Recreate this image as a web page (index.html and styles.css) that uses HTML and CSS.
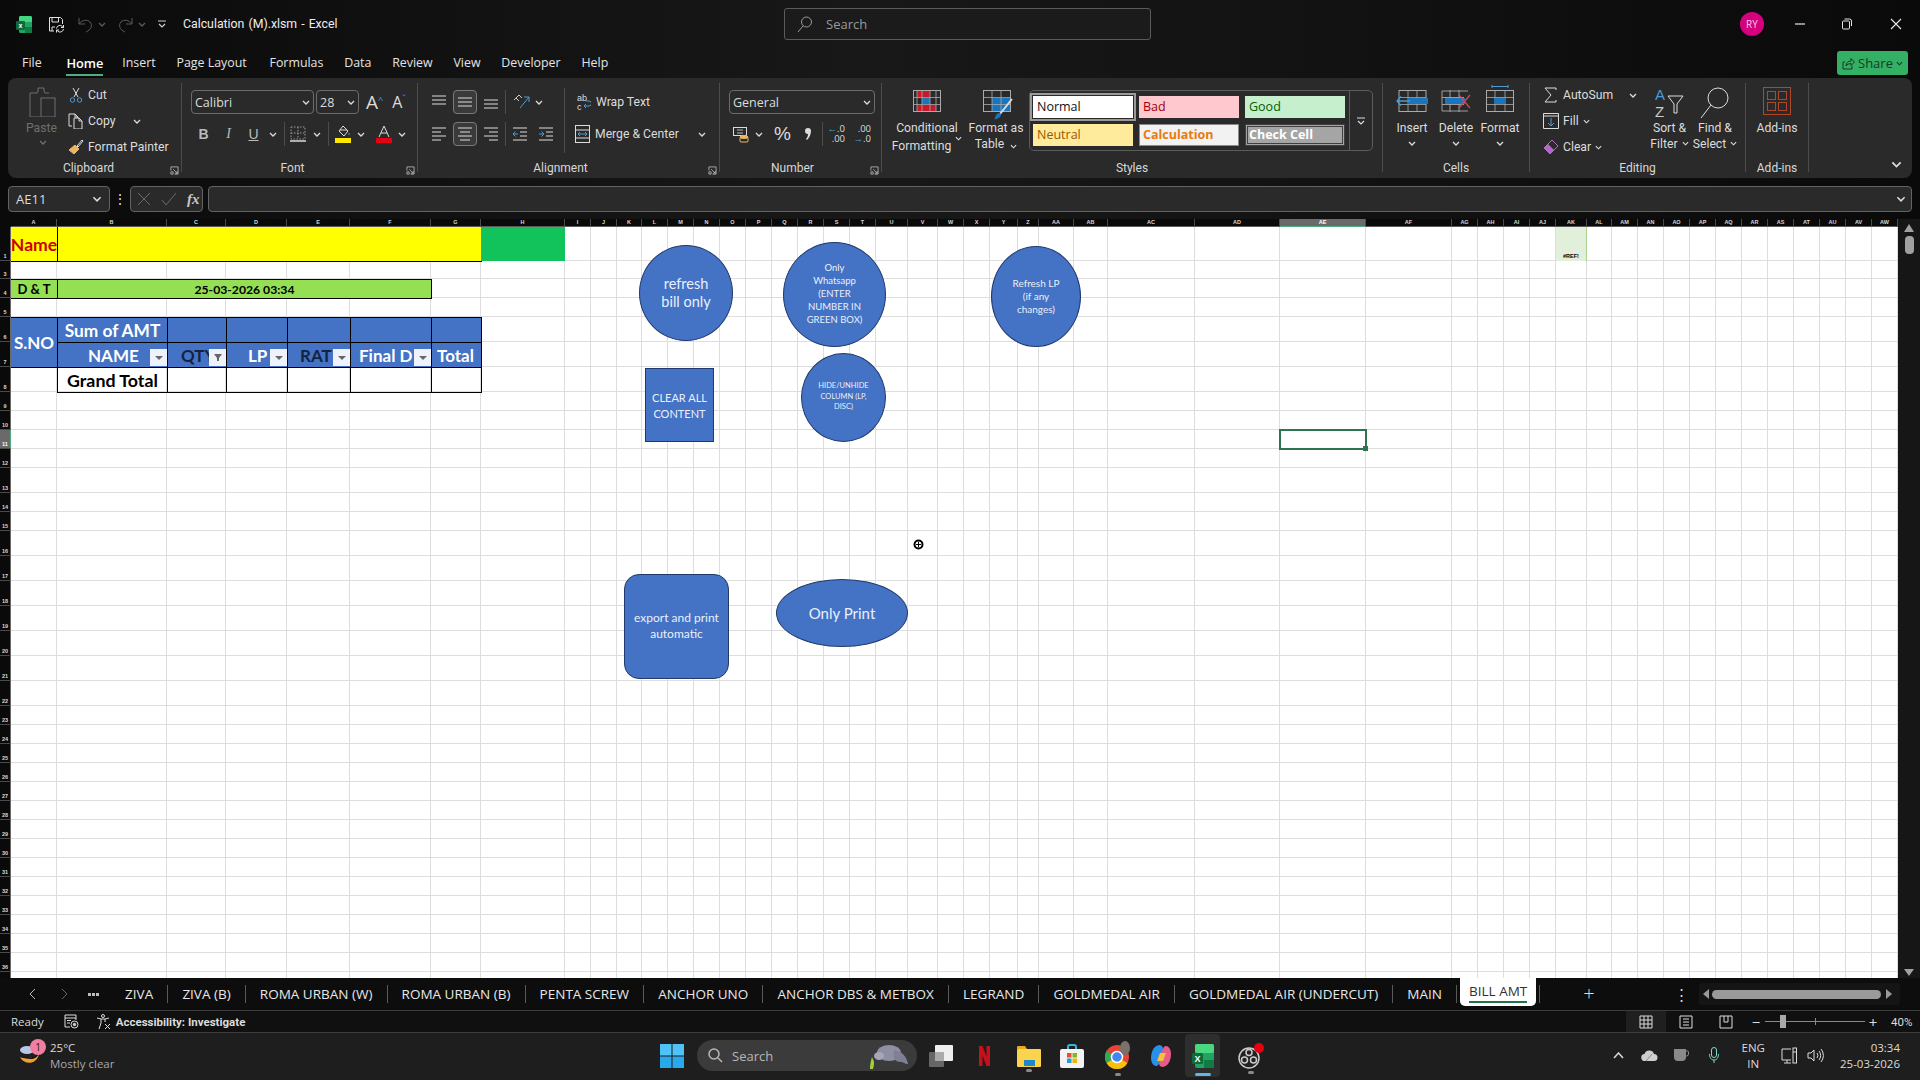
FILE: index.html
```html
<!DOCTYPE html>
<html lang="en">
<head>
    <meta charset="UTF-8">
    <title>Calculation (M).xlsm - Excel</title>
    <link rel="stylesheet" href="styles.css">
</head>
<body>
    <svg class="sprite">
        <symbol id="chev" viewBox="0 0 8 5"><path d="M1 1l3 3 3-3" stroke-width="1.3"/></symbol>
        <symbol id="launcher" viewBox="0 0 10 10"><path d="M1 5V1h8v8H5M3.5 3.5L8 8M5.5 8H8V5.5M1 6.5h2.5V9H1z" stroke-width=".9"/></symbol>
        <symbol id="al-top" viewBox="0 0 14 14"><path d="M0 1h14M0 5h14M0 9h14"/></symbol>
        <symbol id="al-mid" viewBox="0 0 14 14"><path d="M0 3h14M0 7h14M0 11h14"/></symbol>
        <symbol id="al-bot" viewBox="0 0 14 14"><path d="M0 5h14M0 9h14M0 13h14"/></symbol>
        <symbol id="al-left" viewBox="0 0 14 14"><path d="M0 1h14M0 5h9M0 9h14M0 13h9"/></symbol>
        <symbol id="al-center" viewBox="0 0 14 14"><path d="M0 1h14M2 5h10M0 9h14M2 13h10"/></symbol>
        <symbol id="al-right" viewBox="0 0 14 14"><path d="M0 1h14M5 5h9M0 9h14M5 13h9"/></symbol>
    </svg>

    <div class="titlebar">
        <div class="qat">
            <svg class="logo" width="16" height="17" viewBox="0 0 16 17"><rect x="3" y="0" width="13" height="17" rx="1.5" fill="#21a366" stroke="none"/><rect x="3" y="0" width="13" height="6" rx="1.5" fill="#41d67f" stroke="none"/><rect x="9" y="11" width="7" height="6" fill="#107c41" stroke="none"/><rect x="0" y="5" width="9" height="9" rx="1" fill="#0c6b37" stroke="none"/><text x="4.5" y="12.2" class="logo-x">x</text></svg>
            <svg class="save" width="17" height="17" viewBox="0 0 17 17"><path d="M6 15H1.5V1.5h11l2 2V8M4 1.5V6h6.500V1.500M4 15v-4h3"/><path d="M8.500 12.500a3.500 3.500 0 0 1 6-2l1 1M15.500 9v2.500H13M15.500 13a3.500 3.500 0 0 1-6 2l-1-1M8.500 16.500V14H11"/></svg>
            <svg class="undo" width="17" height="17" viewBox="0 0 17 17"><path d="M2 2v6h6M2 8c3-4 8-5 11-2 3 3 1 8-4 10"/></svg>
            <svg class="chev dim" width="8" height="5"><use href="#chev"/></svg>
            <svg class="redo" width="17" height="17" viewBox="0 0 17 17"><path d="M15 2v6H9M15 8c-3-4-8-5-11-2-3 3-1 8 4 10"/></svg>
            <svg class="chev dim" width="8" height="5"><use href="#chev"/></svg>
            <svg class="customize" width="8" height="8" viewBox="0 0 8 8"><path d="M0 1h8M1 4l3 3 3-3" stroke-width="1.2"/></svg>
            <span class="doc-name">Calculation (M).xlsm&nbsp;-&nbsp;Excel</span>
        </div>
        <div class="search-box">
            <svg width="15" height="17" viewBox="0 0 15 17"><circle cx="9.500" cy="6" r="5"/><path d="M6 10l-5 6"/></svg>
            <span>Search</span>
        </div>
        <div class="window-ctrls">
            <div class="avatar">RY</div>
            <svg class="win-min" width="12" height="12" viewBox="0 0 12 12"><path d="M1 6h10" stroke-width="1.2"/></svg>
            <svg class="win-max" width="12" height="12" viewBox="0 0 12 12"><rect x="1.500" y="3" width="7" height="8" rx="1"/><path d="M3.500 1h5a2 2 0 0 1 2 2v5"/></svg>
            <svg class="win-close" width="12" height="12" viewBox="0 0 12 12"><path d="M1 1l10 10M11 1L1 11" stroke-width="1.2"/></svg>
        </div>
    </div>

    <div class="menubar">
        <a class="menu-file">File</a>
        <a class="menu-active">Home</a>
        <a>Insert</a>
        <a>Page Layout</a>
        <a class="menu-formulas">Formulas</a>
        <a>Data</a>
        <a>Review</a>
        <a>View</a>
        <a>Developer</a>
        <a>Help</a>
        <div class="share">
            <svg width="13" height="13" viewBox="0 0 13 13"><path d="M3 5H1v7h9V9M4 9c0-3 2-5 5-5V1.500l3.500 3.500L9 8.500V6.500C7 6.500 5 7.500 4 9z"/></svg>
            <span>Share</span>
            <svg width="7" height="5"><use href="#chev"/></svg>
        </div>
    </div>

    <div class="ribbon">
        <section class="group g-clipboard">
            <div class="group-body">
                <div class="paste">
                    <svg width="28" height="30" viewBox="0 0 28 30"><path d="M20 6h-4l-1-2V1H9v3L8 6H1v24h10"/><rect x="12" y="11" width="14" height="19"/></svg>
                    <span>Paste</span>
                    <svg width="8" height="5"><use href="#chev"/></svg>
                </div>
                <div class="small-col">
                    <div class="small-row"><svg class="ic16" viewBox="0 0 16 16"><path d="M5 1l5 9M11 1L6 10"/><circle cx="4.500" cy="13" r="2.200" stroke="#4a9bd8"/><circle cx="11.500" cy="13" r="2.200" stroke="#4a9bd8"/></svg><span>Cut</span></div>
                    <div class="small-row"><svg class="ic16" viewBox="0 0 16 16"><path d="M4 13H1V1h6l3 3v1M7 1v3h3"/><path d="M6 5h5l3 3v8H6zM11 5v3h3"/></svg><span>Copy</span><svg class="copy-chev" width="8" height="5"><use href="#chev"/></svg></div>
                    <div class="small-row"><svg class="ic16" viewBox="0 0 16 16"><path d="M9 7l5-6 1 1-5 6z" stroke="#ddd"/><path d="M7 6l4 4-5 5-5-4z" fill="#e8b563" stroke="#e8b563"/></svg><span>Format Painter</span></div>
                </div>
            </div>
            <div class="group-label">Clipboard</div>
            <svg class="launcher" width="9" height="9"><use href="#launcher"/></svg>
        </section>

        <section class="group g-font">
            <div class="group-body rows">
                <div class="row">
                    <div class="select font-name"><span>Calibri</span><svg width="8" height="5"><use href="#chev"/></svg></div>
                    <div class="select font-size"><span>28</span><svg width="8" height="5"><use href="#chev"/></svg></div>
                    <div class="grow-a">A<sup>^</sup></div>
                    <div class="shrink-a">A<sup>ˇ</sup></div>
                </div>
                <div class="row">
                    <div class="tb bold">B</div>
                    <div class="tb italic">I</div>
                    <div class="tb under">U</div>
                    <svg class="tb-chev" width="14" height="5"><use href="#chev"/></svg>
                    <div class="sep sep-a"></div>
                    <svg class="borders" width="16" height="16" viewBox="0 0 16 16"><path d="M1 1h14v12H1zM8 1v12M1 7h14" stroke-dasharray="1.500 1.500" stroke="#999"/><path d="M0 15h16" stroke-width="1.500"/></svg>
                    <svg class="tb-chev" width="14" height="5"><use href="#chev"/></svg>
                    <div class="sep sep-b"></div>
                    <svg class="fill-ic" width="16" height="18" viewBox="0 0 16 18"><path d="M8 1l5 5-4 5-5-5zM5 5h7"/><path d="M14 8v2" stroke="#4a9bd8"/><rect y="13" width="16" height="5" fill="#ffe800" stroke="none"/></svg>
                    <svg class="tb-chev" width="14" height="5"><use href="#chev"/></svg>
                    <svg class="color-ic" width="16" height="18" viewBox="0 0 16 18"><path d="M3 12L8 1l5 11M5 8h6"/><rect y="13" width="16" height="5" fill="#e60012" stroke="none"/></svg>
                    <svg class="tb-chev" width="14" height="5"><use href="#chev"/></svg>
                </div>
            </div>
            <div class="group-label">Font</div>
            <svg class="launcher" width="9" height="9"><use href="#launcher"/></svg>
        </section>

        <section class="group g-align">
            <div class="group-body g-align-body">
                <div class="rows align-col">
                    <div class="row">
                        <svg class="al" width="14" height="14"><use href="#al-top"/></svg>
                        <div class="al-box"><svg width="14" height="14"><use href="#al-mid"/></svg></div>
                        <svg class="al" width="14" height="14"><use href="#al-bot"/></svg>
                        <div class="sep"></div>
                        <svg class="orient" width="18" height="18" viewBox="0 0 18 18"><path d="M1 7l5-5 3 3M3 5l3 3" stroke="#ccc"/><path d="M7 15L16 4M11 4h5v5" stroke="#4a9bd8"/></svg>
                        <svg class="orient-chev" width="8" height="5"><use href="#chev"/></svg>
                    </div>
                    <div class="row">
                        <svg class="al" width="14" height="14"><use href="#al-left"/></svg>
                        <div class="al-box"><svg width="14" height="14"><use href="#al-center"/></svg></div>
                        <svg class="al" width="14" height="14"><use href="#al-right"/></svg>
                        <div class="sep"></div>
                        <svg class="indent" width="14" height="14" viewBox="0 0 14 14"><path d="M0 1h14M0 13h14M7 5h7M7 9h7"/><path d="M5 7H0M2.500 4.500L0 7l2.500 2.500" stroke="#4a9bd8"/></svg>
                        <svg class="indent" width="14" height="14" viewBox="0 0 14 14"><path d="M0 1h14M0 13h14M7 5h7M7 9h7"/><path d="M0 7h5M2.500 4.500L5 7 2.500 9.500" stroke="#4a9bd8"/></svg>
                    </div>
                </div>
                <div class="rows merge-col">
                    <div class="row">
                        <svg class="wrap-ic" width="14" height="18" viewBox="0 0 14 18"><text x="0" y="8" class="wrap-ab">ab</text><text x="0" y="17" class="wrap-ab">c</text><path d="M9 8h3a2 2 0 0 1 0 5H7M9 11l-2 2 2 2" stroke="#4a9bd8"/></svg>
                        <span>Wrap Text</span>
                    </div>
                    <div class="row">
                        <svg class="merge-ic" width="15" height="18" viewBox="0 0 15 18"><rect x=".5" y=".5" width="14" height="17"/><path d="M0 5h15M0 13h15"/><path d="M3 9h9M5 7L3 9l2 2M10 7l2 2-2 2" stroke="#4a9bd8"/></svg>
                        <span>Merge &amp; Center</span>
                        <svg class="merge-chev" width="8" height="5"><use href="#chev"/></svg>
                    </div>
                </div>
            </div>
            <div class="group-label">Alignment</div>
            <svg class="launcher" width="9" height="9"><use href="#launcher"/></svg>
        </section>

        <section class="group g-number">
            <div class="group-body rows">
                <div class="row">
                    <div class="select number-format"><span>General</span><svg width="8" height="5"><use href="#chev"/></svg></div>
                </div>
                <div class="row">
                    <svg class="acct" width="16" height="17" viewBox="0 0 16 17"><rect x=".5" y="1.500" width="13" height="8"/><path d="M4 4h6M4 7h6" stroke-width=".8"/><ellipse cx="11" cy="11" rx="4" ry="1.500" fill="#e8b563" stroke="#e8b563"/><rect x="7" y="11" width="8" height="5" rx="1" stroke="#e8b563"/></svg>
                    <svg class="tb-chev" width="14" height="5"><use href="#chev"/></svg>
                    <div class="percent">%</div>
                    <svg class="comma" width="6" height="12" viewBox="0 0 6 12"><path d="M3 0a3 3 0 0 1 3 3c0 4-2 7-4 9l-1-1c1-1 2-3 2-5a3 3 0 0 1 0-6z" fill="currentColor" stroke="none"/></svg>
                    <div class="sep sep-dec"></div>
                    <div class="dec-btn"><span><b>←</b>.0</span><span>.00</span></div>
                    <div class="dec-btn dec-b"><span>.00</span><span><b>→</b>.0</span></div>
                </div>
            </div>
            <div class="group-label">Number</div>
            <svg class="launcher" width="9" height="9"><use href="#launcher"/></svg>
        </section>

        <section class="group g-styles">
            <div class="group-body g-styles-body">
                <div class="big-btn cond">
                    <svg width="28" height="22" viewBox="0 0 28 22"><rect x=".5" y=".5" width="27" height="21" stroke="#aaa"/><rect x="4" y="1" width="13" height="6" fill="#c9182b" stroke="none"/><rect x="9" y="8" width="8" height="6" fill="#1a75bc" stroke="none"/><rect x="4" y="15" width="19" height="6" fill="#c9182b" stroke="none"/><path d="M0 7.500h28M0 14.500h28M4 0v22M9 0v22M17 0v22M23 0v22" stroke="#aaa" stroke-width=".8"/></svg>
                    <span>Conditional</span>
                    <span>Formatting <svg class="inline-chev" width="7" height="5"><use href="#chev"/></svg></span>
                </div>
                <div class="big-btn as-table">
                    <svg width="30" height="32" viewBox="0 0 30 32"><rect x=".5" y=".5" width="27" height="21" stroke="#aaa"/><rect x="9" y="8" width="18" height="13" fill="#1a75bc" stroke="none"/><path d="M0 7.500h28M0 14.500h28M9 0v22M18 0v22" stroke="#aaa" stroke-width=".8"/><path d="M29 9L17 24" stroke="#ddd" stroke-width="2"/><path d="M13 25c3-3 5-2 5 0s-4 5-7 4c2-1 1-3 2-4z" fill="#1a75bc" stroke="none"/></svg>
                    <span>Format as</span>
                    <span>Table <svg class="inline-chev" width="7" height="5"><use href="#chev"/></svg></span>
                </div>
                <div class="gallery">
                    <div class="gallery-grid">
                        <div class="st st-normal">Normal</div>
                        <div class="st st-bad">Bad</div>
                        <div class="st st-good">Good</div>
                        <div class="st st-neutral">Neutral</div>
                        <div class="st st-calc">Calculation</div>
                        <div class="st st-check">Check Cell</div>
                    </div>
                    <div class="gallery-more"><svg width="8" height="8" viewBox="0 0 8 8"><path d="M0 1h8M1 4l3 3 3-3" stroke-width="1.2"/></svg></div>
                </div>
            </div>
            <div class="group-label">Styles</div>
        </section>

        <section class="group g-cells">
            <div class="group-body g-cells-body">
                <div class="big-btn cell-btn">
                    <svg width="32" height="22" viewBox="0 0 32 22"><rect x="3" y=".5" width="27" height="21" stroke="#aaa"/><path d="M3 7.500h27M3 14.500h27M12 0v22M21 0v22" stroke="#aaa" stroke-width=".8"/><rect x="12" y="8" width="20" height="6" fill="#1a75bc" stroke="none"/><path d="M14 11H1M5 6.500L1 11l4 4.500" stroke="#4a9bd8" stroke-width="1.300"/></svg>
                    <span>Insert</span>
                    <svg class="under-chev" width="8" height="5"><use href="#chev"/></svg>
                </div>
                <div class="big-btn cell-btn">
                    <svg width="30" height="22" viewBox="0 0 30 22"><path d="M27 1H1v20h26M1 7.500h22M1 14.500h22M9 0v22M18 0v22" stroke="#aaa" stroke-width=".9"/><rect x="4" y="8" width="20" height="6" fill="#1a75bc" stroke="none"/><path d="M18 5l11 13M29 5L18 18" stroke="#c94a55" stroke-width="1.300"/></svg>
                    <span>Delete</span>
                    <svg class="under-chev" width="8" height="5"><use href="#chev"/></svg>
                </div>
                <div class="big-btn cell-btn cell-format">
                    <svg width="28" height="27" viewBox="0 0 28 27"><path d="M6 1.500h16M6 0v3M22 0v3" stroke="#4a9bd8"/><rect x=".5" y="5.500" width="27" height="21" stroke="#aaa"/><path d="M0 12.500h28M0 19.500h28M9 5v22M19 5v22" stroke="#aaa" stroke-width=".8"/><rect x="8" y="13" width="12" height="6" fill="#1a75bc" stroke="none"/></svg>
                    <span>Format</span>
                    <svg class="under-chev" width="8" height="5"><use href="#chev"/></svg>
                </div>
            </div>
            <div class="group-label">Cells</div>
        </section>

        <section class="group g-editing">
            <div class="group-body g-editing-body">
                <div class="small-col edit-col">
                    <div class="small-row"><svg class="ic16" viewBox="0 0 16 16"><path d="M13 3V1H2l6 7-6 7h11v-2"/></svg><span>AutoSum</span><svg class="sum-chev" width="8" height="5"><use href="#chev"/></svg></div>
                    <div class="small-row"><svg class="ic16" viewBox="0 0 16 16"><path d="M.5.500h15v15H.5zM0 3h16"/><path d="M8 5v8M5 10l3 3 3-3" stroke="#4a9bd8"/></svg><span>Fill</span><svg width="7" height="5"><use href="#chev"/></svg></div>
                    <div class="small-row"><svg class="ic16" viewBox="0 0 16 16"><path d="M9 1l6 6-8 8-6-6z" stroke="#b568c8"/><path d="M5 5l6 6-4 4-6-6z" fill="#b568c8" stroke="none"/></svg><span>Clear</span><svg width="7" height="5"><use href="#chev"/></svg></div>
                </div>
                <div class="big-btn sort-btn">
                    <svg width="30" height="32" viewBox="0 0 30 32"><text x="0" y="13" class="sort-a">A</text><text x="0" y="30" class="sort-z">Z</text><path d="M13 9h15l-6 8v9h-3v-9z"/></svg>
                    <span>Sort &amp;</span>
                    <span>Filter <svg class="inline-chev" width="7" height="5"><use href="#chev"/></svg></span>
                </div>
                <div class="big-btn find-btn">
                    <svg width="30" height="32" viewBox="0 0 30 32"><circle cx="18" cy="11" r="10"/><path d="M11 18L1 31"/></svg>
                    <span>Find &amp;</span>
                    <span>Select <svg class="inline-chev" width="7" height="5"><use href="#chev"/></svg></span>
                </div>
            </div>
            <div class="group-label">Editing</div>
        </section>

        <section class="group g-addins">
            <div class="group-body">
                <div class="big-btn addin-btn">
                    <svg width="28" height="28" viewBox="0 0 28 28"><rect x=".5" y=".5" width="27" height="27"/><rect x="4.500" y="4.500" width="8" height="8"/><rect x="15.500" y="4.500" width="8" height="8"/><rect x="4.500" y="15.500" width="8" height="8"/><rect x="15.500" y="15.500" width="8" height="8"/></svg>
                    <span>Add-ins</span>
                </div>
            </div>
            <div class="group-label">Add-ins</div>
        </section>
        <svg class="collapse" width="11" height="7"><use href="#chev"/></svg>
    </div>

    <div class="formula-bar">
        <div class="name-box"><span>AE11</span><svg width="10" height="6"><use href="#chev"/></svg></div>
        <div class="fb-dots">⋮</div>
        <div class="fx-box">
            <svg width="14" height="14" viewBox="0 0 14 14"><path d="M1 1l12 12M13 1L1 13"/></svg>
            <svg width="16" height="14" viewBox="0 0 16 14"><path d="M1 8l4 5L15 1"/></svg>
            <span>fx</span>
        </div>
        <div class="fb-input"><svg width="10" height="6"><use href="#chev"/></svg></div>
    </div>

    <div class="sheet-wrap">
        <div class="sheet" id="sheet">
            <div class="c c-name-label">Name</div>
            <div class="c c-name-box"></div>
            <div class="c c-green-box"></div>
            <div class="c c-dt-label">D &amp; T</div>
            <div class="c c-dt-value">25-03-2026 03:34</div>

            <div class="c c-sno">S.NO</div>
            <div class="c c-sum hd">Sum of AMT</div>
            <div class="c hd col-c row-sum"></div>
            <div class="c hd col-d row-sum"></div>
            <div class="c hd col-e row-sum"></div>
            <div class="c hd col-f row-sum"></div>
            <div class="c hd col-g row-sum"></div>

            <div class="c hd c-pivot-b row-head">NAME<span class="filter-btn"></span></div>
            <div class="c hd col-c row-head dark-text pad-qty">QTY<span class="filter-btn filtered"><svg width="10" height="10" viewBox="0 0 10 10"><path d="M1 1h8L6 5v3H4V5z" fill="#666" stroke="none"/></svg></span></div>
            <div class="c hd col-d row-head pad-lp">LP<span class="filter-btn"></span></div>
            <div class="c hd col-e row-head dark-text pad-rat">RAT<span class="filter-btn"></span></div>
            <div class="c hd col-f row-head pad-final">Final D<span class="filter-btn"></span></div>
            <div class="c hd col-g row-head pad-total">Total</div>

            <div class="c c-grand">Grand Total</div>
            <div class="c col-c row-total"></div>
            <div class="c col-d row-total"></div>
            <div class="c col-e row-total"></div>
            <div class="c col-f row-total"></div>
            <div class="c col-g row-total"></div>

            <div class="c-ref">#REF!</div>
            <div class="c-selected"></div>
        </div>

        <!-- macro buttons float over the grid -->
        <div class="shape s-refresh oval">refresh<br>bill only</div>
        <div class="shape s-whatsapp oval">Only<br>Whatsapp<br>(ENTER<br>NUMBER IN<br>GREEN BOX)</div>
        <div class="shape s-refresh-lp oval">Refresh LP<br>(if any<br>changes)</div>
        <div class="shape s-clear">CLEAR ALL<br>CONTENT</div>
        <div class="shape s-hide oval">HIDE/UNHIDE<br>COLUMN (LP,<br>DISC)</div>
        <div class="shape s-export">export and print<br>automatic</div>
        <div class="shape s-print oval">Only Print</div>
        <svg class="busy-cursor" width="11" height="11" viewBox="0 0 11 11"><circle cx="5.500" cy="5.500" r="4" fill="#fff" stroke="#000" stroke-width="2"/><path d="M5.500 3v5M3 5.500h5" stroke="#000"/></svg>

        <div class="vscroll">
            <div class="vs-up"></div>
            <div class="vs-thumb"></div>
            <div class="vs-down"></div>
        </div>
    </div>

    <div class="sheet-tabs">
        <div class="tab-nav">
            <svg width="7" height="12" viewBox="0 0 7 12"><path d="M6 1L1 6l5 5"/></svg>
            <svg class="nav-dim" width="7" height="12" viewBox="0 0 7 12"><path d="M1 1l5 5-5 5"/></svg>
            <svg class="nav-more" width="11" height="3" viewBox="0 0 11 3"><path d="M0 0h3v3H0zM4 0h3v3H4zM8 0h3v3H8z" fill="currentColor" stroke="none"/></svg>
        </div>
        <div class="tabs">
            <div class="tab">ZIVA</div>
            <div class="tab">ZIVA (B)</div>
            <div class="tab">ROMA URBAN (W)</div>
            <div class="tab">ROMA URBAN (B)</div>
            <div class="tab">PENTA SCREW</div>
            <div class="tab">ANCHOR UNO</div>
            <div class="tab">ANCHOR DBS &amp; METBOX</div>
            <div class="tab">LEGRAND</div>
            <div class="tab">GOLDMEDAL AIR</div>
            <div class="tab">GOLDMEDAL AIR (UNDERCUT)</div>
            <div class="tab">MAIN</div>
            <div class="tab-active">BILL AMT</div>
            <div class="tab-end"></div>
        </div>
        <div class="tabs-right">
            <div class="add-sheet">+</div>
            <div class="tab-more">⋮</div>
            <div class="hscroll">
                <div class="hs-left"></div>
                <div class="hs-thumb"></div>
                <div class="hs-right"></div>
            </div>
        </div>
    </div>

    <div class="statusbar">
        <span class="st-ready">Ready</span>
        <svg class="st-macro" width="15" height="15" viewBox="0 0 15 15"><path d="M1 1h11v5M1 1v12h5M1 4h11M3 6.500h4M3 9h3"/><circle cx="10.500" cy="10.500" r="3.500"/><circle cx="10.500" cy="10.500" r="1.200" fill="currentColor"/></svg>
        <svg class="st-access" width="16" height="16" viewBox="0 0 16 16"><circle cx="7" cy="2" r="1.500"/><path d="M1 4l4 1h4l4-1M5 5v4L3 15M9 5v3M9 10l5 5M14 10l-5 5"/></svg>
        <b>Accessibility: Investigate</b>
        <div class="status-right">
            <div class="view-btn view-on"><svg width="14" height="14" viewBox="0 0 14 14"><path d="M1 1h12v12H1zM1 5h12M1 9h12M5 1v12M9 1v12"/></svg></div>
            <div class="view-btn"><svg width="14" height="14" viewBox="0 0 14 14"><path d="M1 1h12v12H1zM4 4h6M4 7h6M4 10h6"/></svg></div>
            <div class="view-btn"><svg width="14" height="14" viewBox="0 0 14 14"><path d="M1 1h12v12H1zM5 1v6h4V1"/></svg></div>
            <span class="zoom-sign">−</span>
            <div class="zoom-slider"><i class="zoom-tick"></i><i class="zoom-thumb"></i></div>
            <span class="zoom-sign">+</span>
            <span class="zoom-pct">40%</span>
        </div>
    </div>

    <div class="taskbar">
        <div class="weather">
            <div class="weather-icon">
                <svg width="24" height="25" viewBox="0 0 24 25"><path d="M20 11a10 10 0 0 1-19 3c6 3 13 1 19-3z" fill="#f0a030" stroke="none"/><path d="M3 13c5 3 12 2 17-3-1 5-8 9-17 3z" fill="#111" stroke="none"/><ellipse cx="8" cy="7" rx="7" ry="4" fill="#b9c8e8" stroke="none"/></svg>
                <span class="weather-badge">1</span>
            </div>
            <div class="weather-text"><span>25°C</span><span class="dim-text">Mostly clear</span></div>
        </div>
        <div class="task-center">
            <svg class="start" width="24" height="24" viewBox="0 0 24 24"><rect width="11.500" height="11.500" fill="#4fc3f7" stroke="none"/><rect x="12.500" width="11.500" height="11.500" fill="#4fc3f7" stroke="none"/><rect y="12.500" width="11.500" height="11.500" fill="#29a9ec" stroke="none"/><rect x="12.500" y="12.500" width="11.500" height="11.500" fill="#29a9ec" stroke="none"/></svg>
            <div class="task-search">
                <svg width="15" height="15" viewBox="0 0 15 15" stroke-width="1.500"><circle cx="6" cy="6" r="5"/><path d="M10 10l4 4"/></svg>
                <span>Search</span>
                <svg class="manatee" width="40" height="28" viewBox="0 0 40 28"><ellipse cx="20" cy="11" rx="12" ry="8" fill="#8f8fa3" stroke="none"/><path d="M25 8c8 1 13 7 14 14-4 0-4-2-7-2-6 0-8-3-7-12z" fill="#7f7f95" stroke="none"/><ellipse cx="10" cy="14" rx="5" ry="4" fill="#a6a6b8" stroke="none"/><path d="M1 27c0-5 1-8 2-12 1 3 2 3 2 6s-1 5-1 6z" fill="#a3d33b" stroke="none"/></svg>
            </div>
            <svg class="task-ic" width="24" height="22" viewBox="0 0 24 22"><rect y="7" width="15" height="15" rx="1" fill="#666" stroke="none"/><rect x="6" width="18" height="16" rx="1" fill="#eee" stroke="none"/><rect x="6" y="7" width="9" height="9" fill="#aaa" stroke="none"/></svg>
            <svg class="task-ic ic-netflix" width="11" height="20" viewBox="0 0 11 20"><path d="M0 0h3.500v20L0 20zM7.500 0H11v20H7.500zM0 0h3.500l7.500 20H7.500z" fill="#c8101c" stroke="none"/></svg>
            <div class="task-slot slot-explorer"><svg width="24" height="22" viewBox="0 0 24 22"><path d="M0 2a1 1 0 0 1 1-1h7l2 3H0z" fill="#e8a820" stroke="none"/><rect y="4" width="24" height="18" rx="1" fill="#fbd34c" stroke="none"/><rect x="7" y="15" width="11" height="6" fill="#1d87c9" stroke="none"/></svg><i></i></div>
            <svg class="task-ic ic-store" width="24" height="24" viewBox="0 0 24 24"><path d="M8 6V3a2 2 0 0 1 2-2h4a2 2 0 0 1 2 2v3" stroke="#35b8d8" stroke-width="2"/><rect y="5" width="24" height="19" rx="2" fill="#f3f3f3" stroke="none"/><rect x="7" y="9" width="4.500" height="4.500" fill="#e8502a" stroke="none"/><rect x="12.500" y="9" width="4.500" height="4.500" fill="#7db92b" stroke="none"/><rect x="7" y="14.500" width="4.500" height="4.500" fill="#2a9bd8" stroke="none"/><rect x="12.500" y="14.500" width="4.500" height="4.500" fill="#f4b400" stroke="none"/></svg>
            <div class="task-slot slot-chrome"><svg width="26" height="30" viewBox="0 0 26 30"><circle cx="12" cy="16" r="12" fill="#ea4335" stroke="none"/><path d="M12 16L1.600 22a12 12 0 0 1 0-12z" fill="#34a853" stroke="none"/><path d="M12 16l10.400 6A12 12 0 0 1 1.600 22z" fill="#f4c20d" stroke="none"/><circle cx="12" cy="16" r="5.500" fill="#4285f4" stroke="#fff" stroke-width="1.500"/><ellipse cx="20" cy="7" rx="5" ry="7" fill="#77726a" stroke="none"/></svg><i></i></div>
            <svg class="task-ic ic-copilot" width="22" height="24" viewBox="0 0 22 24"><path d="M9 1c-6 1-8 8-8 13 0 4 2 8 5 8 2 0 3-2 4-5l3-12C13 2 11 1 9 1z" fill="#2a8fe8" stroke="none"/><path d="M13 23c6-1 8-8 8-13 0-4-2-8-5-8-2 0-3 2-4 5L9 19c0 3 2 4 4 4z" fill="#e85c8a" stroke="none"/><path d="M10 9h6l-3 8H7z" fill="#f4c23a" stroke="none"/></svg>
            <div class="task-excel"><svg width="22" height="24" viewBox="0 0 22 24"><rect x="3" width="19" height="24" rx="2" fill="#21a366" stroke="none"/><rect x="3" width="19" height="9" rx="2" fill="#49d77f" stroke="none"/><rect x="12" y="16" width="10" height="8" fill="#107c41" stroke="none"/><rect y="9" width="11" height="11" rx="1.500" fill="#0c6b37" stroke="none"/><text x="5.500" y="18" class="logo-x big">X</text></svg><i></i></div>
            <div class="task-slot slot-obs"><svg width="26" height="26" viewBox="0 0 26 26"><circle cx="11" cy="15" r="10" fill="#222" stroke="#ccc" stroke-width="1.500"/><circle cx="11" cy="9.500" r="3" stroke="#ccc" stroke-width="1.500"/><circle cx="6.500" cy="17" r="3" stroke="#ccc" stroke-width="1.500"/><circle cx="15.500" cy="17" r="3" stroke="#ccc" stroke-width="1.500"/><circle cx="21" cy="5" r="5" fill="#e80010" stroke="none"/></svg><i></i></div>
        </div>
        <div class="tray">
            <svg class="tray-up" width="11" height="7" viewBox="0 0 11 7"><path d="M1 6l4.500-5L10 6" stroke-width="1.500"/></svg>
            <svg class="tray-cloud" width="17" height="11" viewBox="0 0 17 11"><path d="M4 11a3.500 3.500 0 0 1-.5-7A5 5 0 0 1 13 4a3.500 3.500 0 0 1 0 7z" fill="#cfcfcf" stroke="none"/><path d="M5 11l6-7" stroke="#888"/></svg>
            <svg class="tray-cup" width="15" height="13" viewBox="0 0 15 13"><path d="M0 0h12v8a4 4 0 0 1-4 4H4a4 4 0 0 1-4-4z" fill="#8a8a8a" stroke="none"/><path d="M12 2h1.500a1 1 0 0 1 1 1v2a2 2 0 0 1-2 2H12" stroke="#8a8a8a"/></svg>
            <svg class="tray-mic" width="10" height="17" viewBox="0 0 10 17"><rect x="2.500" y=".5" width="5" height="10" rx="2.500"/><path d="M.5 7c0 4 2 6 4.500 6s4.500-2 4.500-6M5 13v3"/></svg>
            <div class="tray-lang"><span>ENG</span><span>IN</span></div>
            <svg class="tray-net" width="16" height="18" viewBox="0 0 16 18"><path d="M10 2H1v11h9M3 16h7M6 13v3"/><rect x="12" y="1" width="3.500" height="15"/><path d="M12 5h3.500"/></svg>
            <svg class="tray-vol" width="17" height="15" viewBox="0 0 17 15"><path d="M1 5v5h3l3 3V2L4 5zM10 5a4 4 0 0 1 0 5M12 3a7 7 0 0 1 0 9M14 1a10 10 0 0 1 0 13"/></svg>
            <div class="tray-clock"><span>03:34</span><span>25-03-2026</span></div>
        </div>
    </div>

    <script src="grid.js"></script>
</body>
</html>
```
FILE: styles.css
```css
/* General Reset */
* {
    margin: 0;
    padding: 0;
    box-sizing: border-box;
}

html, body {
    width: 1920px;
    height: 1080px;
    overflow: hidden;
}

body {
    display: flex;
    flex-direction: column;
    background: linear-gradient(to right, #0a0a0a, #181818 45%, #0a0a0a);
    color: #dcdcdc;
    font-family: "Open Sans", sans-serif;
    font-size: 12.5px;
}

svg {
    display: block;
    flex: none;
    fill: none;
    stroke: currentColor;
}

.sprite {
    position: absolute;
    width: 0;
    height: 0;
}

/* Title bar */
.titlebar {
    height: 48px;
    display: flex;
    align-items: center;
}

.qat {
    display: flex;
    align-items: center;
    width: 784px;
    padding-left: 16px;
}

.logo-x {
    font: bold 7px "Liberation Sans", sans-serif;
    fill: #fff;
    stroke: none;
    text-anchor: middle;
}

.logo-x.big {
    font-size: 9px;
}

.save {
    margin-left: 16px;
    color: #e0e0e0;
}

.undo, .redo {
    color: #5a5a5a;
}

.undo {
    margin-left: 12px;
}

.redo {
    margin-left: 11px;
}

.chev.dim {
    color: #5a5a5a;
    margin-left: 4px;
}

.customize {
    margin-left: 12px;
    color: #ccc;
}

.doc-name {
    margin-left: 17px;
    color: #eee;
    font-family: Roboto, sans-serif;
    font-size: 12.3px;
    word-spacing: 1px;
    white-space: nowrap;
}

.search-box {
    width: 367px;
    height: 32px;
    border: 1px solid #5a5a5a;
    border-radius: 3px;
    background: #1b1b1b;
    display: flex;
    align-items: center;
    padding-left: 12px;
    gap: 14px;
    color: #9a9a9a;
}

.search-box span {
    font-size: 13px;
}

.window-ctrls {
    flex: 1;
    display: flex;
    align-items: center;
    color: #e4e4e4;
}

.avatar {
    width: 24px;
    height: 24px;
    border-radius: 50%;
    background: #d6007f;
    color: #f4c9e2;
    font-size: 10px;
    display: flex;
    align-items: center;
    justify-content: center;
    margin-left: 589px;
}

.win-min {
    margin-left: 30px;
}

.win-max {
    margin-left: 35px;
}

.win-close {
    margin-left: 37px;
}

/* Menu row */
.menubar {
    height: 30px;
    display: flex;
    align-items: center;
    padding-left: 22px;
    gap: 20.8px;
}

.menubar a {
    color: #e4e4e4;
    font-size: 12.4px;
    height: 26px;
    line-height: 26px;
}

.menu-file {
    margin-right: 4px;
}

.menubar a.menu-formulas {
    margin-left: 2px;
}

.menubar a.menu-active {
    color: #fff;
    font-weight: 600;
    font-size: 12.8px;
    margin-right: -2px;
    border-bottom: 2px solid #4fae7f;
}

.share {
    margin-left: auto;
    margin-right: 12px;
    width: 71px;
    height: 24px;
    background: #33b063;
    border-radius: 3px;
    color: #173a25;
    display: flex;
    align-items: center;
    gap: 3px;
    padding-left: 5px;
    font-size: 13px;
}

/* Ribbon */
.ribbon {
    height: 100px;
    margin: 0 8px;
    background: #2a2a2a;
    border-radius: 8px;
    display: flex;
    padding-top: 5px;
    position: relative;
}

.group {
    height: 89px;
    border-right: 1px solid #4c4c4c;
    display: flex;
    flex-direction: column;
    position: relative;
    flex: none;
}

.group-body {
    flex: 1;
    min-height: 0;
}

.group-label {
    height: 14px;
    line-height: 14px;
    margin-bottom: -3px;
    text-align: center;
    font-family: Roboto, sans-serif;
    font-size: 12px;
    color: #d8d8d8;
}

.launcher {
    position: absolute;
    right: 2px;
    bottom: -3px;
    color: #bbb;
}

.g-clipboard {
    width: 174px;
}

.g-clipboard .group-label {
    padding-right: 12px;
}

.g-clipboard .group-body {
    display: flex;
    padding-left: 14px;
}

.paste {
    width: 42px;
    display: flex;
    flex-direction: column;
    align-items: center;
    padding-top: 4px;
    color: #6f6f6f;
    font-family: Roboto, sans-serif;
    font-size: 12.2px;
}

.paste span {
    margin-top: 4px;
    margin-right: 3px;
}

.paste svg:last-child {
    margin-top: 5px;
}

.small-col {
    display: flex;
    flex-direction: column;
    margin-left: 4px;
    margin-top: -1px;
}

.small-row {
    height: 26px;
    display: flex;
    align-items: center;
    gap: 4px;
    white-space: nowrap;
    font-family: Roboto, sans-serif;
    font-size: 12.2px;
}

.ic16 {
    width: 16px;
    height: 16px;
}

.copy-chev {
    margin-left: 14px;
}

.rows {
    display: flex;
    flex-direction: column;
    gap: 8px;
    padding-top: 7px;
}

.row {
    height: 24px;
    display: flex;
    align-items: center;
    white-space: nowrap;
}

.select {
    height: 24px;
    border: 1px solid #6c6c6c;
    border-radius: 4px;
    display: flex;
    align-items: center;
    justify-content: space-between;
    padding: 0 3px;
}

.g-font {
    width: 236px;
}

.g-font .group-label {
    padding-right: 14px;
}

.g-font .group-body {
    padding-left: 9px;
}

.font-name {
    width: 123px;
}

.font-size {
    width: 43px;
    margin-left: 2px;
}

.grow-a, .shrink-a {
    font-size: 19px;
    line-height: 24px;
    white-space: nowrap;
}

.grow-a {
    margin-left: 7px;
}

.shrink-a {
    margin-left: 9px;
    font-size: 16px;
}

.grow-a sup, .shrink-a sup {
    font-size: 9px;
    color: #4a9bd8;
    vertical-align: 6px;
    line-height: 0;
}

.tb {
    width: 25px;
    text-align: center;
    font: 14px "Liberation Sans", sans-serif;
    color: #bbb;
}

.tb.bold {
    font-weight: bold;
}

.tb.italic {
    font: italic 14px "Liberation Serif", serif;
}

.under {
    text-decoration: underline;
}

.tb-chev {
    width: 14px;
}

.sep {
    width: 1px;
    height: 24px;
    background: #4c4c4c;
}

.sep-a {
    margin-left: 4px;
}

.borders {
    margin-left: 5px;
}

.borders + .tb-chev {
    margin-left: 4px;
}

.sep-b {
    margin-left: 4px;
}

.fill-ic {
    margin-left: 6px;
}

.fill-ic + .tb-chev {
    margin-left: 3px;
}

.color-ic {
    margin-left: 8px;
}

.color-ic + .tb-chev {
    margin-left: 3px;
}

.g-align {
    width: 302px;
}

.g-align .group-label {
    padding-right: 16px;
}

.g-align-body {
    display: flex;
    padding-left: 14px;
}

.align-col {
    width: 132px;
}

.align-col .row {
    gap: 7px;
}

.al-box {
    width: 24px;
    height: 24px;
    border: 1px solid #7a7a7a;
    border-radius: 4px;
    background: #3a3a3a;
    display: flex;
    align-items: center;
    justify-content: center;
}

.orient-chev {
    margin-left: -3px;
}

.align-col .indent + .indent {
    margin-left: 5px;
}

.merge-col {
    border-left: 1px solid #4c4c4c;
    margin: 5px 0 8px;
    padding: 2px 0 0 10px;
    font-family: Roboto, sans-serif;
    font-size: 12.2px;
}

.merge-col .row {
    gap: 5px;
}

.wrap-ic {
    margin-left: 2px;
}

.wrap-ab {
    font: 9px "Liberation Sans", sans-serif;
    fill: #ddd;
    stroke: none;
}

.merge-chev {
    margin-left: 14px;
}

.g-number {
    width: 162px;
}

.g-number .group-label {
    padding-right: 16px;
}

.g-number .group-body {
    padding-left: 9px;
}

.number-format {
    width: 146px;
}

.acct {
    margin-left: 4px;
}

.acct + .tb-chev {
    margin-left: 3px;
}

.percent {
    margin-left: 8px;
    width: 16px;
    font: 19px "Liberation Sans", sans-serif;
    letter-spacing: -1px;
}

.comma {
    margin-left: 15px;
}

.sep-dec {
    margin-left: 11px;
}

.dec-btn {
    margin-left: 6px;
    width: 16px;
    display: flex;
    flex-direction: column;
    align-items: flex-end;
    font-size: 9.5px;
    line-height: 10px;
}

.dec-btn b {
    font-weight: 400;
    color: #4a9bd8;
}

.dec-b {
    margin-left: 10px;
}

.g-styles {
    width: 501px;
}

.g-styles-body {
    display: flex;
}

.big-btn {
    display: flex;
    flex-direction: column;
    align-items: center;
    line-height: 16px;
    white-space: nowrap;
    padding-top: 7px;
    font-family: Roboto, sans-serif;
    font-size: 12.2px;
}

.big-btn span {
    height: 16px;
}

.big-btn svg:first-child {
    margin-bottom: 8px;
}

.inline-chev {
    display: inline-block;
    vertical-align: 1px;
    margin-left: 1px;
}

.cond {
    margin-left: 11px;
    width: 68px;
}

.as-table {
    margin-left: 9px;
    width: 52px;
}

.as-table svg:first-child {
    margin-bottom: -2px;
    margin-left: 3px;
}

.gallery {
    margin: 7px 0 0 7px;
    width: 344px;
    height: 61px;
    border: 1px solid #5c5c5c;
    border-radius: 5px;
    display: flex;
}

.gallery-grid {
    width: 319px;
    padding: 5px 0 0 3px;
    display: grid;
    grid-template-columns: repeat(3, 100px);
    grid-template-rows: 22px 22px;
    column-gap: 6px;
    row-gap: 6px;
}

.st {
    line-height: 22px;
    padding-left: 4px;
    font-size: 12.5px;
    overflow: hidden;
    white-space: nowrap;
}

.st-normal {
    background: #fff;
    color: #111;
    outline: 2px solid #9a9a9a;
    outline-offset: 1px;
}

.st-bad {
    background: #ffc7ce;
    color: #9c0006;
}

.st-good {
    background: #c6efce;
    color: #006100;
}

.st-neutral {
    background: #ffeb9c;
    color: #9c5700;
}

.st-calc {
    background: #f2f2f2;
    color: #e87a10;
    font-weight: 700;
    border: 1px solid #8a8a8a;
    line-height: 20px;
    padding-left: 3px;
}

.st-check {
    background: #a5a5a5;
    color: #fff;
    font-weight: 700;
    border: 3px double #3f3f3f;
    line-height: 16px;
    padding-left: 1px;
}

.gallery-more {
    flex: 1;
    border-left: 1px solid #5c5c5c;
    display: flex;
    align-items: center;
    justify-content: center;
}

.g-cells {
    width: 147px;
}

.g-cells-body {
    display: flex;
    padding-left: 7px;
}

.cell-btn {
    width: 44px;
}

.under-chev {
    margin-top: 5px;
}

.cell-format {
    padding-top: 2px;
}

.g-editing {
    width: 216px;
}

.g-editing-body {
    display: flex;
    padding-left: 13px;
}

.edit-col {
    width: 104px;
    margin-left: 0;
    margin-top: -1px;
}

.sum-chev {
    margin-left: 12px;
}

.sort-btn {
    width: 45px;
    padding-top: 4px;
}

.find-btn {
    width: 46px;
    padding-top: 4px;
}

.sort-btn svg:first-child, .find-btn svg:first-child {
    margin-bottom: 1px;
}

.sort-a, .sort-z {
    font: 15px "Liberation Sans", sans-serif;
    stroke: none;
}

.sort-a {
    fill: #4a9bd8;
}

.sort-z {
    fill: #ccc;
}

.g-addins {
    width: 63px;
}

.addin-btn {
    padding-top: 4px;
}

.addin-btn svg:first-child {
    margin-bottom: 5px;
    stroke: #b0462a;
}

.collapse {
    position: absolute;
    right: 10px;
    bottom: 10px;
}

/* Formula bar */
.formula-bar {
    height: 41px;
    padding: 8px 8px 7px;
    display: flex;
    align-items: stretch;
}

.name-box, .fx-box, .fb-input {
    background: #2a2a2a;
    border: 1px solid #636363;
    border-radius: 4px;
    display: flex;
    align-items: center;
}

.name-box {
    width: 102px;
    padding: 0 7px;
    justify-content: space-between;
    font-size: 13px;
}

.fb-dots {
    width: 20px;
    text-align: center;
    line-height: 26px;
    font-size: 14px;
}

.fx-box {
    width: 73px;
    padding-left: 6px;
    gap: 10px;
    color: #6a6a6a;
}

.fx-box span {
    font: italic bold 15px "Liberation Serif", serif;
    color: #c8c8c8;
}

.fb-input {
    margin-left: 5px;
    flex: 1;
    justify-content: flex-end;
    padding-right: 5px;
}

/* Sheet */
.sheet-wrap {
    height: 759px;
    background: #050505;
    position: relative;
    display: flex;
    overflow: hidden;
}

.sheet {
    width: 1898px;
    display: grid;
    color: #000;
    font-family: Lato, "Liberation Sans", sans-serif;
    font-weight: 700;
    background: #fff;
    align-content: start;
}

.col-head, .row-head-label {
    background: #0a0a0a;
    color: #d8d8d8;
    font: bold 5.5px "Liberation Sans", sans-serif;
    display: flex;
    align-items: flex-end;
}

.col-head {
    justify-content: center;
    line-height: 8px;
    border-right: 1px solid #4a4a4a;
    border-bottom: 1px solid #5a5a5a;
}

.col-head.is-active {
    background: #6a6a6a;
    color: #fff;
    border-bottom: 1px solid #4fae7f;
}

.row-head-label {
    justify-content: center;
    padding-bottom: 1px;
    border-right: 1px solid #6a6a6a;
    border-bottom: 1px solid #4a4a4a;
}

.row-head-label.is-active {
    background: #6a6a6a;
    color: #fff;
    border-right: 1px solid #4fae7f;
}

.corner {
    background: #0a0a0a;
}

.grid-cell {
    border-right: 1px solid #dedede;
    border-bottom: 1px solid #dedede;
}

.c {
    border: 1px solid #000;
    margin: 0 -1px -1px 0;
    display: flex;
    align-items: center;
    white-space: nowrap;
    overflow: hidden;
    position: relative;
}

.c-name-label {
    grid-column: 2;
    grid-row: 2;
    background: #ff0;
    color: #cc0000;
    font-size: 17.6px;
    border-left: 0;
    border-top: 0;
    justify-content: center;
}

.c-name-box {
    grid-column: 3 / 9;
    grid-row: 2;
    background: #ff0;
    border-top: 0;
}

.c-green-box {
    grid-column: 9;
    grid-row: 2;
    background: #12c25a;
    border: 0;
    margin: 0;
}

.c-dt-label {
    grid-column: 2;
    grid-row: 4;
    background: #95df55;
    font-size: 13px;
    border-left: 0;
    justify-content: center;
}

.c-dt-value {
    grid-column: 3 / 8;
    grid-row: 4;
    background: #95df55;
    font-size: 12.2px;
    justify-content: center;
}

.c-sno {
    grid-column: 2;
    grid-row: 6 / 8;
    background: #4472c4;
    color: #fff;
    font-size: 17px;
    border-left: 0;
    justify-content: center;
}

.hd {
    background: #4472c4;
    color: #fff;
    font-size: 17px;
}

.c-sum {
    grid-column: 3;
    grid-row: 6;
    justify-content: center;
    font-size: 17.3px;
}

.c-pivot-b {
    grid-column: 3;
    grid-row: 7;
    padding-left: 30px;
}

.col-c { grid-column: 4; }
.col-d { grid-column: 5; }
.col-e { grid-column: 6; }
.col-f { grid-column: 7; }
.col-g { grid-column: 8; }
.row-sum { grid-row: 6; }
.row-head { grid-row: 7; }
.row-total { grid-row: 8; }

.hd.dark-text {
    color: #14233f;
}

.pad-qty { padding-left: 13px; }
.pad-lp { padding-left: 21px; }
.pad-rat { padding-left: 12px; }
.pad-final { padding-left: 8px; }
.pad-total { padding-left: 5px; }

.filter-btn {
    position: absolute;
    right: 0;
    bottom: 1px;
    width: 17px;
    height: 17px;
    background: #eef2fa;
    display: flex;
    align-items: center;
    justify-content: center;
}

.filter-btn:not(.filtered)::after {
    content: "";
    border: 4px solid transparent;
    border-top: 4px solid #666;
    margin-top: 4px;
}

.c-grand {
    grid-column: 3;
    grid-row: 8;
    font-size: 17.8px;
    justify-content: center;
}

.c-ref {
    grid-column: 38;
    grid-row: 2;
    background: #e2efda;
    border-right: 1px solid #a9d18e;
    font: bold 5.5px "Liberation Sans", sans-serif;
    display: flex;
    align-items: flex-end;
    justify-content: center;
    padding-bottom: 2px;
}

.c-selected {
    grid-column: 32;
    grid-row: 11;
    border: 2px solid #2f7350;
    margin: -1px;
    position: relative;
    z-index: 2;
}

.c-selected::after {
    content: "";
    position: absolute;
    right: -3px;
    bottom: -3px;
    width: 5px;
    height: 5px;
    background: #2f7350;
}

.shape {
    position: absolute;
    background: #4472c4;
    border: 1.5px solid #203a6b;
    color: #eaf0fb;
    font-family: Lato, "Liberation Sans", sans-serif;
    display: flex;
    align-items: center;
    justify-content: center;
    text-align: center;
}

.oval {
    border-radius: 50%;
}

.s-refresh {
    left: 639px;
    top: 26px;
    width: 94px;
    height: 96px;
    font-size: 14.5px;
    line-height: 18px;
    padding-bottom: 1px;
}

.s-whatsapp {
    left: 783px;
    top: 23px;
    width: 103px;
    height: 105px;
    font-size: 9.5px;
    line-height: 13px;
    padding-bottom: 3px;
}

.s-refresh-lp {
    left: 991px;
    top: 27px;
    width: 90px;
    height: 101px;
    font-size: 10px;
    line-height: 13px;
    padding-bottom: 1px;
}

.s-clear {
    left: 645px;
    top: 149px;
    width: 69px;
    height: 74px;
    font-size: 11px;
    line-height: 16px;
    padding-top: 2px;
}

.s-hide {
    left: 801px;
    top: 134px;
    width: 85px;
    height: 89px;
    font-size: 7.5px;
    line-height: 10.5px;
    padding-bottom: 1px;
}

.s-export {
    left: 624px;
    top: 355px;
    width: 105px;
    height: 105px;
    border-radius: 15px;
    font-size: 12px;
    line-height: 16px;
    padding-bottom: 2px;
}

.s-print {
    left: 776px;
    top: 360px;
    width: 132px;
    height: 68px;
    font-size: 15px;
}

.busy-cursor {
    position: absolute;
    left: 913px;
    top: 320px;
}

.vscroll {
    width: 22px;
    background: #161616;
    display: flex;
    flex-direction: column;
    align-items: center;
}

.vs-up {
    margin-top: 5px;
    border: 5px solid transparent;
    border-top: 0;
    border-bottom: 8px solid #a0a0a0;
}

.vs-thumb {
    margin-top: 4px;
    width: 9px;
    height: 18px;
    background: #a0a0a0;
    border-radius: 4px;
}

.vs-down {
    margin-top: auto;
    margin-bottom: 2px;
    border: 5px solid transparent;
    border-bottom: 0;
    border-top: 7px solid #a0a0a0;
}

/* Sheet tabs */
.sheet-tabs {
    height: 33px;
    display: flex;
    border-bottom: 1px solid #3c3c3c;
    background: #0d0d0d;
}

.tab-nav {
    width: 111px;
    flex: none;
    display: flex;
    align-items: center;
    padding-left: 29px;
    color: #bdbdbd;
}

.tab-nav .nav-dim {
    margin-left: 25px;
    color: #666;
}

.nav-more {
    margin-left: 20px;
}

.tabs {
    width: 1449px;
    display: flex;
    align-items: center;
    overflow: hidden;
    flex: none;
}

.tab {
    padding: 0 14.1px;
    font-size: 13.5px;
    line-height: 18px;
    border-right: 1px solid #5a5a5a;
    white-space: nowrap;
    color: #e8e8e8;
    flex: none;
}

.tab-active {
    align-self: flex-start;
    margin-left: 3px;
    height: 28px;
    padding: 2px 9px 0;
    background: #fff;
    color: #333;
    font-size: 13.5px;
    line-height: 22px;
    border-radius: 0 0 5px 5px;
    white-space: nowrap;
    flex: none;
    position: relative;
}

.tab-active::after {
    content: "";
    position: absolute;
    left: 9px;
    right: 9px;
    bottom: 3px;
    height: 2px;
    background: #217346;
}

.tab-end {
    width: 1px;
    height: 18px;
    background: #5a5a5a;
    margin-left: 3px;
    flex: none;
}

.tabs-right {
    flex: 1;
    display: flex;
    align-items: center;
}

.add-sheet {
    width: 58px;
    text-align: center;
    font-size: 20px;
    font-weight: 300;
    line-height: 24px;
}

.tab-more {
    margin-left: 53px;
    width: 20px;
    text-align: center;
    font-size: 15px;
}

.hscroll {
    margin-left: 8px;
    width: 201px;
    height: 22px;
    background: #151515;
    display: flex;
    align-items: center;
    gap: 3px;
    padding-left: 4px;
    border-radius: 3px;
}

.hs-left {
    border: 5px solid transparent;
    border-left: 0;
    border-right: 6px solid #9a9a9a;
}

.hs-thumb {
    width: 169px;
    height: 9px;
    background: #9a9a9a;
    border-radius: 5px;
}

.hs-right {
    border: 5px solid transparent;
    border-right: 0;
    border-left: 6px solid #9a9a9a;
    margin-left: 2px;
}

/* Status bar */
.statusbar {
    height: 22px;
    flex: none;
    display: flex;
    align-items: center;
    padding-left: 11px;
    background: #101010;
    font-size: 11.5px;
    border-bottom: 1px solid #3c3c3c;
}

.st-macro {
    margin-left: 20px;
}

.st-access {
    margin-left: 17px;
}

.statusbar b {
    margin-left: 4px;
    font-family: Roboto, sans-serif;
    font-size: 11.5px;
    font-weight: 700;
}

.status-right {
    margin-left: auto;
    display: flex;
    align-items: center;
    height: 100%;
}

.view-btn {
    width: 40px;
    height: 100%;
    display: flex;
    align-items: center;
    justify-content: center;
}

.view-on {
    background: #1f1f1f;
}

.zoom-sign {
    font-size: 15px;
    width: 10px;
    text-align: center;
    margin-left: 5px;
}

.zoom-slider {
    width: 100px;
    height: 1px;
    background: #8a8a8a;
    margin: 0 3px 0 4px;
    position: relative;
}

.zoom-slider + .zoom-sign {
    margin-left: 0;
}

.zoom-thumb {
    position: absolute;
    left: 15px;
    top: -6px;
    width: 6px;
    height: 13px;
    background: #a8a8a8;
}

.zoom-tick {
    position: absolute;
    left: 50px;
    top: -3px;
    width: 1px;
    height: 7px;
    background: #8a8a8a;
}

.zoom-pct {
    width: 21px;
    margin: 0 8px 0 13px;
    white-space: nowrap;
    font-family: Roboto, sans-serif;
}

/* Taskbar */
.taskbar {
    flex: 1;
    background: #1e1e1e;
    display: flex;
    align-items: center;
    padding-bottom: 2px;
}

.weather {
    width: 660px;
    display: flex;
    align-items: center;
    padding-left: 19px;
}

.weather-icon {
    position: relative;
}

.weather-badge {
    position: absolute;
    left: 11px;
    top: -4px;
    width: 16px;
    height: 16px;
    border-radius: 50%;
    background: #f07fa0;
    color: #3a1020;
    font-size: 10px;
    line-height: 16px;
    text-align: center;
}

.weather-text {
    margin-left: 7px;
    display: flex;
    flex-direction: column;
    font-size: 11.5px;
    line-height: 16px;
}

.dim-text {
    color: #a8a8a8;
}

.task-center {
    display: flex;
    align-items: center;
    color: #ddd;
}

.task-search {
    margin-left: 13px;
    width: 220px;
    height: 31px;
    border-radius: 16px;
    background: #3b3b3b;
    display: flex;
    align-items: center;
    padding-left: 11px;
    gap: 9px;
    font-size: 13px;
    color: #b8b8b8;
    position: relative;
}

.manatee {
    position: absolute;
    right: 8px;
    top: 2px;
}

.task-ic {
    flex: none;
}

.task-search + .task-ic {
    margin-left: 12px;
}

.ic-netflix {
    margin-left: 26px;
}

.slot-explorer {
    margin-left: 27px;
}

.ic-store {
    margin-left: 19px;
}

.slot-chrome {
    margin-left: 21px;
}

.ic-copilot {
    margin-left: 19px;
}

.task-slot {
    position: relative;
}

.task-slot i, .task-excel i {
    position: absolute;
    left: 50%;
    bottom: -5px;
    width: 6px;
    height: 3px;
    margin-left: -3px;
    border-radius: 2px;
    background: #8a8a8a;
}

.task-excel {
    margin-left: 13px;
    width: 35px;
    height: 43px;
    background: #2e2e2e;
    border-radius: 4px;
    display: flex;
    align-items: center;
    justify-content: center;
    position: relative;
}

.task-excel i {
    width: 16px;
    margin-left: -8px;
    bottom: 1px;
    background: #5bb8e8;
}

.slot-obs {
    margin-left: 18px;
}

.tray {
    margin-left: auto;
    display: flex;
    align-items: center;
    color: #dcdcdc;
    padding-right: 20px;
    font-size: 11.5px;
}

.tray-cloud {
    margin-left: 17px;
}

.tray-cup {
    margin-left: 16px;
}

.tray-mic {
    margin-left: 20px;
    color: #7fd8c8;
}

.tray-lang {
    margin-left: 23px;
    display: flex;
    flex-direction: column;
    align-items: center;
    line-height: 16px;
}

.tray-net {
    margin-left: 16px;
}

.tray-vol {
    margin-left: 10px;
}

.tray-clock {
    margin-left: 16px;
    display: flex;
    flex-direction: column;
    align-items: flex-end;
    line-height: 16px;
}
```
FILE: grid.js
```js
// column widths in px, A onwards
const colWidths = [46, 110, 59, 61, 63, 81, 50, 84, 26, 26, 25, 26, 26, 26, 26, 26, 26, 26, 26, 26, 32, 30, 26, 26, 28, 21, 35, 34, 87, 85, 86, 86, 26, 26, 26, 26, 31, 25, 26, 26, 26, 26, 26, 26, 26, 26, 26, 26, 26];

// row number, height in px. row 2 is hidden in the file
const rows = [[1, 34], [3, 18], [4, 19], [5, 19], [6, 25], [7, 25], [8, 25], [9, 19], [10, 19], [11, 19], [12, 19], [13, 25], [14, 19], [15, 19]];
for (let r = 16; r <= 22; r++) rows.push([r, 25]);
for (let r = 23; r <= 37; r++) rows.push([r, 19]);

const activeCol = 'AE';
const activeRow = 11;

const sheet = document.getElementById('sheet');
sheet.style.gridTemplateColumns = '11px ' + colWidths.map(w => w + 'px').join(' ');
sheet.style.gridTemplateRows = '8px ' + rows.map(r => r[1] + 'px').join(' ');

function colName(i) {
    const letter = n => String.fromCharCode(65 + n);
    return i < 26 ? letter(i) : letter(Math.floor(i / 26) - 1) + letter(i % 26);
}

function makeCell(cls, col, row, text) {
    const el = document.createElement('div');
    el.className = cls;
    el.style.gridColumn = col;
    el.style.gridRow = row;
    if (text) el.textContent = text;
    return el;
}

const frag = document.createDocumentFragment();
frag.appendChild(makeCell('corner', 1, 1));

colWidths.forEach((w, i) => {
    const name = colName(i);
    frag.appendChild(makeCell('col-head' + (name === activeCol ? ' is-active' : ''), i + 2, 1, name));
});

rows.forEach((r, j) => {
    frag.appendChild(makeCell('row-head-label' + (r[0] === activeRow ? ' is-active' : ''), 1, j + 2, String(r[0])));
    colWidths.forEach((w, i) => {
        frag.appendChild(makeCell('grid-cell', i + 2, j + 2));
    });
});

sheet.prepend(frag);
```
